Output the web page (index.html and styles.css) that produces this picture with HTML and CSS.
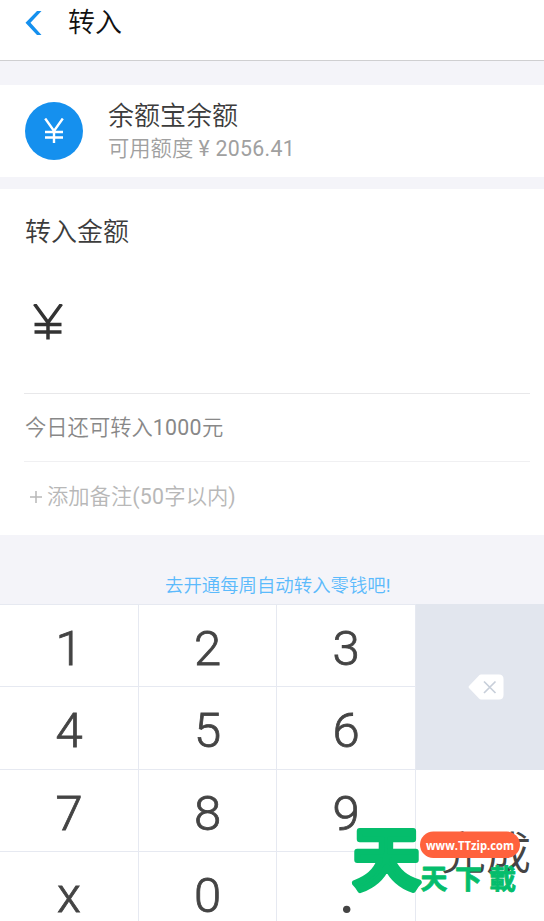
FILE: index.html
```
<!DOCTYPE html>
<html lang="zh-CN">
<head>
<meta charset="utf-8">
<title>转入</title>
<link rel="stylesheet" href="styles.css">
</head>
<body>
<div class="screen">
  <header class="topbar">
    <svg class="back" width="17" height="24" viewBox="0 0 17 24"><path d="M16.500 0h-4.500L.5 11.700 12 24h4.500L5.500 11.700z" fill="#1590ee"/></svg>
    <h1 class="title">转入</h1>
  </header>
  <section class="account">
    <div class="coin"><svg width="20" height="25" viewBox="0 0 20 25" fill="none" stroke="#fff" stroke-width="2.400"><path d="M1.200.5 10 13 18.800.5M10 13v12M1 14h18M1 19.500h18"/></svg></div>
    <div class="account-text">
      <div class="account-name">余额宝余额</div>
      <div class="account-quota">可用额度 <span class="num">¥ 2056.41</span></div>
    </div>
  </section>
  <section class="form">
    <div class="amount">
      <div class="label">转入金额</div>
      <svg class="yen" width="30" height="36" viewBox="0 0 30 36" fill="none" stroke="#333" stroke-width="3.500"><path d="M1.500 0 15 18.500 28.500 0M15 18v17.500M1.500 20.500h27M1.500 28h27"/></svg>
    </div>
    <div class="limit">今日还可转入<span class="num">1000</span>元</div>
    <div class="note"><svg class="plus" width="12" height="12" viewBox="0 0 12 12"><path d="M6 0v12M0 6h12" stroke="#b8b8b8" stroke-width="1.500"/></svg><span>添加备注<span class="num">(50</span>字以内<span class="num">)</span></span></div>
  </section>
  <div class="promo">去开通每周自动转入零钱吧<span class="num">!</span></div>
  <main class="keypad">
    <div class="key">1</div><div class="key">2</div><div class="key">3</div>
    <div class="key">4</div><div class="key">5</div><div class="key">6</div>
    <div class="key">7</div><div class="key">8</div><div class="key">9</div>
    <div class="key">x</div><div class="key">0</div><div class="key dot">.</div>
    <div class="erase"><svg width="36" height="26" viewBox="0 0 36 26"><path d="M13 .5h18q4.500 0 4.500 4.500v16q0 4.500-4.500 4.500H13q-1 0-2-1L1 14q-1-1 0-2L11 1.500q1-1 2-1z" fill="#fff"/><path d="m16 7.500 11.500 11.500m0-11.500L16 19" stroke="#c8cfda" stroke-width="1.700"/></svg></div>
    <div class="done">完成</div>
  </main>
  <svg class="watermark" width="172" height="74" viewBox="0 0 172 74">
    <text class="mark mark-big" x="2" y="58">天</text>
    <rect x="69" y="5.500" width="100" height="26.500" rx="13.250" fill="#ff623d"/>
    <text class="mark-url" x="75" y="23.500" textLength="88" lengthAdjust="spacingAndGlyphs">www.TTzip.com</text>
    <text class="mark mark-small" y="62.500"><tspan x="69.500">天</tspan><tspan x="104">下</tspan><tspan x="138">載</tspan></text>
  </svg>
</div>
</body>
</html>
```
FILE: styles.css
```
* { box-sizing: border-box; }
body { margin: 0; background: #f4f4f9; }
svg { display: block; flex: none; }
.screen {
  position: relative;
  display: flex;
  flex-direction: column;
  width: 544px;
  height: 921px;
  overflow: hidden;
  font-family: Roboto, "Noto Sans CJK SC", sans-serif;
  font-weight: 350;
}
.num { font-weight: 400; letter-spacing: .3px; }
.topbar {
  flex: none;
  display: flex;
  align-items: center;
  height: 61px;
  padding: 0 25px 15px;
  border-bottom: 1px solid #cfcfd1;
  background: #fff;
}
.title { margin: 1px 0 0 26px; font-size: 27px; line-height: 36px; font-weight: 350; color: #111; }
.account {
  flex: none;
  display: flex;
  align-items: center;
  height: 92px;
  margin: 24px 0 12px;
  padding-left: 25px;
  background: #fff;
}
.coin {
  display: flex;
  align-items: center;
  justify-content: center;
  width: 58px;
  height: 58px;
  margin-top: -1px;
  border-radius: 50%;
  background: #1590ee;
}
.account-text { margin: 0 0 0 25px; }
.account-name { font-size: 26px; line-height: 36px; color: #3c3c3c; }
.account-quota { font-size: 21.300px; line-height: 30px; color: #a0a0a0; }
.form {
  flex: none;
  height: 346px;
  padding: 0 14px 0 24px;
  background: #fff;
}
.amount { height: 205px; padding: 23px 0 0 1px; border-bottom: 1px solid #e8e8ea; }
.label { font-size: 26px; line-height: 40px; color: #3c3c3c; }
.yen { margin: 52px 0 0 8px; }
.limit {
  height: 68px;
  padding-left: 1px;
  border-bottom: 1px solid #f0f0f2;
  font-size: 21.300px;
  line-height: 67px;
  color: #888;
}
.note {
  display: flex;
  align-items: center;
  gap: 5px;
  height: 70px;
  padding-left: 6px;
  font-size: 21.300px;
  line-height: 32px;
  color: #b8b8b8;
}
.note > span { margin-top: -1px; }
.promo {
  flex: none;
  height: 69px;
  padding: 37px 0 0 165px;
  font-size: 18.400px;
  line-height: 28px;
  color: #5bbafc;
}
.keypad {
  flex: none;
  display: grid;
  grid-template-columns: 139px 138px 139px 128px;
  grid-template-rows: 82px 83px 82px 83px;
}
.key {
  display: flex;
  align-items: center;
  justify-content: center;
  padding-top: 5px;
  border-top: 1px solid #e6e9f1;
  border-right: 1px solid #e6e9f1;
  background: #fff;
  font-size: 49px;
  line-height: 1;
  color: #444;
  -webkit-text-stroke: .8px #444;
}
.dot { font-weight: 400; padding-left: 2px; -webkit-text-stroke-width: 2px; }
.erase {
  grid-area: 1 / 4 / 3 / 5;
  display: flex;
  align-items: center;
  padding-left: 52px;
  background: #e2e6ee;
}
.done {
  grid-area: 3 / 4 / 5 / 5;
  display: flex;
  align-items: center;
  justify-content: center;
  padding: 0 0 4px 12px;
  border-top: 1px solid #e2e6ee;
  background: #fff;
  font-size: 45px;
  color: #444;
}
.watermark { position: absolute; left: 351px; top: 826px; overflow: visible; }
.mark {
  font-family: "Noto Sans CJK TC", sans-serif;
  font-weight: 700;
  fill: #05bd6c;
  stroke: #05bd6c;
  stroke-linejoin: round;
}
.mark-big { font-size: 67px; stroke-width: 6px; }
.mark-small { font-size: 27px; stroke-width: .8px; }
.mark-url { font: 700 13px "Open Sans", sans-serif; fill: #fff; }
```
